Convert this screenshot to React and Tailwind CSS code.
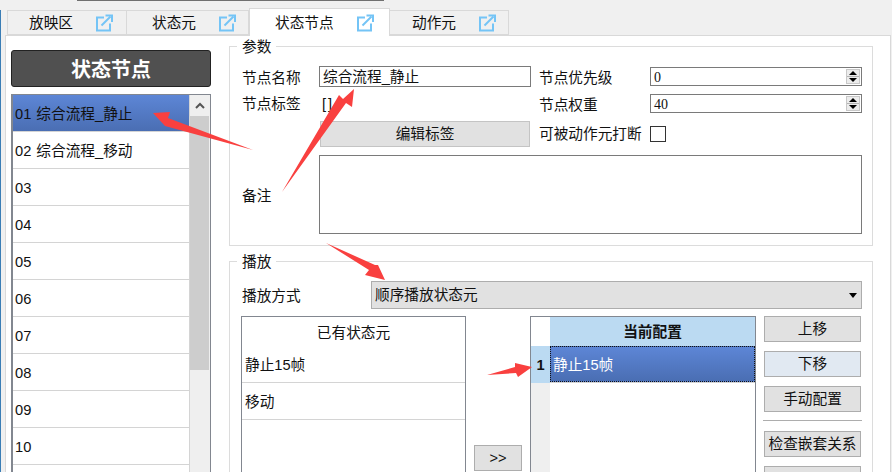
const CJK = '"Liberation Sans","Noto Sans CJK SC",sans-serif';

const TabIcon = () => (
  <svg width="18" height="18" viewBox="0 0 18 18" fill="none" stroke="#74c4f6" strokeWidth="2" className="shrink-0">
    <path d="M9 3.5H2v13h13V9.5" />
    <path d="M6.5 11.5L15.5 2.5" />
    <path d="M10.5 1.5h6.5v6.5" />
  </svg>
);

const Tab = ({ label, active, className }) => (
  <div
    className={`flex items-center gap-[22px] border border-[#d9d9d9] ${className} ${
      active ? 'relative z-10 -mb-px h-[28px] border-b-0 bg-white' : 'h-[25px] border-l-0 first:border-l bg-[#f0f0f0]'
    }`}
  >
    <span>{label}</span>
    <TabIcon />
  </div>
);

const Button = ({ children, className = '' }) => (
  <div className={`flex items-center justify-center border border-[#adadad] bg-[#e1e1e1] ${className}`}>{children}</div>
);

const Spin = ({ value }) => (
  <div className="flex h-[19px] w-[212px] items-center justify-between border border-[#7a7a7a] bg-white pl-[3px] pr-[1px]">
    <span className="pt-[2px] font-['Liberation_Serif'] text-[14px]">{value}</span>
    <div className="flex h-[15px] w-[14px] flex-col items-center justify-between border border-[#c8c8c8] bg-[#ececec] py-[1px]">
      <div className="h-0 w-0 border-x-[4px] border-b-[4px] border-x-transparent border-b-black" />
      <div className="h-px w-full bg-[#b5b5b5]" />
      <div className="h-0 w-0 border-x-[4px] border-t-[4px] border-x-transparent border-t-black" />
    </div>
  </div>
);

const Legend = ({ children }) => (
  <div className="absolute -top-[11px] left-[7px] bg-white px-[5px] leading-[22px]">{children}</div>
);

const Row = ({ children, className = '' }) => (
  <div className={`flex h-[37px] items-center border-b border-[#d4d4d4] pt-[2px] ${className}`}>{children}</div>
);

const listItems = ['03', '04', '05', '06', '07', '08', '09', '10'];

const App = () => (
  <div
    className="relative flex h-[472px] w-[892px] flex-col overflow-hidden bg-[#f0f0f0] text-[14.67px] text-[#111]"
    style={{ fontFamily: CJK }}
  >
    <div className="absolute bottom-0 left-0 top-[10px] w-px bg-[#3a7db5]" />
    <div className="ml-[77px] h-px w-[307px] shrink-0 bg-[#707070]" />

    <div className="flex h-[34px] shrink-0 items-end pl-[7px]">
      <Tab label="放映区" className="w-[120px] pl-[21px]" />
      <Tab label="状态元" className="w-[122px] pl-[25px]" />
      <Tab label="状态节点" className="w-[141px] pl-[25px]" active />
      <Tab label="动作元" className="w-[119px] pl-[22px]" />
    </div>

    <div className="ml-[5px] flex w-[886px] flex-1 border border-b-0 border-[#d9d9d9] bg-white pl-[5px]">
      <div className="w-[200px] shrink-0 pt-[14px]">
        <div className="flex h-[37px] items-center justify-center rounded-[3px] border border-[#222] bg-[#505050] pt-[2px] text-[20px] font-bold text-white">
          状态节点
        </div>
        <div className="mt-[7px] flex h-[400px] border border-l-2 border-[#828790] [word-spacing:1px]">
          <div className="flex-1">
            <Row className="bg-gradient-to-b from-[#5d86d6] to-[#4a6eb3] pl-[2px]">01 综合流程_静止</Row>
            <Row className="pl-[2px]">02 综合流程_移动</Row>
            {listItems.map((n) => (
              <Row key={n} className="pl-[2px]">
                {n}
              </Row>
            ))}
          </div>
          <div className="w-[21px] shrink-0 border-l border-[#d4d4d4] bg-[#efefef]">
            <div className="flex h-[21px] items-center justify-center">
              <svg width="10" height="7" viewBox="0 0 10 7" fill="none" stroke="#555" strokeWidth="2">
                <path d="M1 6L5 2l4 4" />
              </svg>
            </div>
            <div className="mr-px h-[254px] bg-[#cdcdcd]" />
          </div>
        </div>
      </div>

      <div className="ml-[18px] w-[644px] shrink-0 pt-[10px]">
        <div className="relative h-[200px] border border-[#dcdcdc] pl-[12px] pt-[19px]">
          <Legend>参数</Legend>
          <div className="flex h-[21px] items-center">
            <span className="w-[77px] pt-[2px]">节点名称</span>
            <div className="flex h-[21px] w-[212px] items-center border border-[#7a7a7a] pl-[3px]">综合流程_静止</div>
            <span className="ml-[8px] w-[111px] pt-[2px]">节点优先级</span>
            <Spin value="0" />
          </div>
          <div className="mt-[6px] flex h-[21px] items-center">
            <span className="w-[77px]">节点标签</span>
            <span className="w-[212px] pl-[3px] tracking-[2px]">[]</span>
            <span className="ml-[8px] w-[111px] pt-[2px]">节点权重</span>
            <Spin value="40" />
          </div>
          <div className="mt-[7px] flex h-[26px] items-center">
            <Button className="ml-[78px] h-[26px] w-[210px] border-[#c4c4c4]">编辑标签</Button>
            <span className="ml-[9px] w-[111px]">可被动作元打断</span>
            <div className="h-[16px] w-[16px] border border-[#333]" />
          </div>
          <div className="mt-[8px] flex h-[79px] items-center">
            <span className="w-[77px] pt-[3px]">备注</span>
            <div className="h-[79px] w-[543px] border border-[#7a7a7a]" />
          </div>
        </div>

        <div className="relative mt-[15px] h-[240px] border border-[#dcdcdc] pl-[11px] pt-[19px]">
          <Legend>播放</Legend>
          <div className="flex h-[28px] items-center">
            <span className="ml-px w-[129px] pt-[2px]">播放方式</span>
            <div className="flex h-[28px] w-[491px] items-center justify-between border border-[#adadad] bg-[#e1e1e1] pl-[3px] pr-[3px]">
              <span>顺序播放状态元</span>
              <div className="mr-[1px] h-0 w-0 border-x-[4px] border-t-[5px] border-x-transparent border-t-black" />
            </div>
          </div>
          <div className="mt-[7px] flex">
            <div className="h-[200px] w-[225px] shrink-0 border border-[#828790]">
              <div className="flex h-[29px] items-center justify-center pt-[3px]">已有状态元</div>
              <Row className="pl-[3px]">静止15帧</Row>
              <Row className="pl-[3px]">移动</Row>
            </div>
            <div className="w-[64px] shrink-0 pl-[8px] pt-[129px]">
              <Button className="h-[26px] w-[48px]">&gt;&gt;</Button>
            </div>
            <div className="h-[200px] w-[226px] shrink-0 border border-[#828790]">
              <div className="flex h-[29px]">
                <div className="w-[19px] shrink-0 bg-white" />
                <div className="flex flex-1 items-center justify-center bg-[#bbdaf2] font-bold">当前配置</div>
              </div>
              <div className="flex h-[37px]">
                <div className="flex w-[19px] shrink-0 items-center justify-center bg-[#bbdaf2] font-bold">1</div>
                <div className="flex flex-1 border-b border-[#d4d4d4]">
                  <div className="flex flex-1 items-center border border-dotted border-[#111] bg-gradient-to-b from-[#5d86d6] to-[#4a6eb3] pl-[2px] pt-[2px] text-white">
                    静止15帧
                  </div>
                </div>
              </div>
              <div className="h-[130px] w-[19px] bg-[#efefef]" />
            </div>
            <div className="ml-[8px] w-[97px] shrink-0">
              <Button className="h-[26px]">上移</Button>
              <Button className="mt-[9px] h-[26px] border-[#2f86c9] bg-[#e1e9f2]">下移</Button>
              <Button className="mt-[9px] h-[26px]">手动配置</Button>
              <div className="-mx-px mt-[8px] h-px bg-[#adadad]" />
              <Button className="mt-[10px] h-[26px]">检查嵌套关系</Button>
              <Button className="mt-[9px] h-[26px]" />
            </div>
          </div>
        </div>
      </div>
    </div>

    <svg width="892" height="472" viewBox="0 0 892 472" className="pointer-events-none absolute left-0 top-0 z-20" fill="#f9403f">
      <polygon points="153,113 170,112 168,118 253,150 165,126" />
      <polygon points="354,89 352,107 346,103 282,192 339,95 343,99" />
      <polygon points="385,280 365,275 369,270 326,243 375,265 378,265" />
      <polygon points="532,367 518,377 516,373 487,375 515,367 515,363" />
    </svg>
  </div>
);

export default App;
